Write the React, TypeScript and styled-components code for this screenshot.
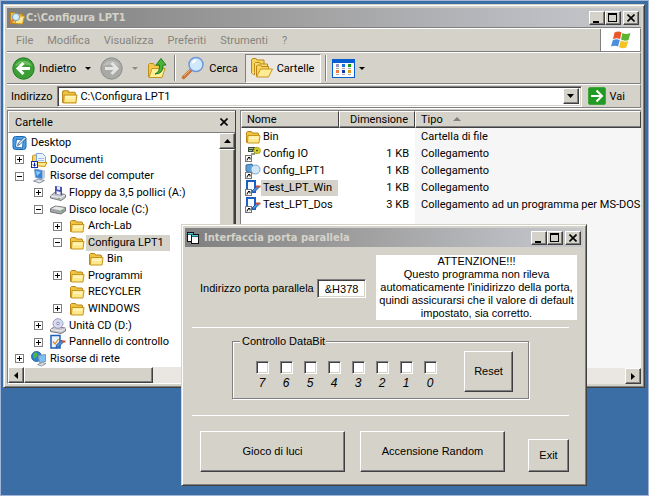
import React, { useState } from 'react';
import styled, { createGlobalStyle, css } from 'styled-components';

const face = '#d5d3c9';
const shade = '#808080';
const dark = '#404040';
const uiFont = 'Roboto, "Noto Sans", sans-serif';
const titleFont = '"DejaVu Sans Condensed", "DejaVu Sans", sans-serif';
const formFont = '"Liberation Sans", Arial, sans-serif';

const GlobalStyle = createGlobalStyle`
  *, *::before, *::after { box-sizing: border-box; }
  body { margin: 0; background: #3a6ea5; }
  button, input, table { font: inherit; color: inherit; }
  ul { list-style: none; margin: 0; padding: 0; }
  svg { display: block; flex: none; }
`;

const raised = css`
  border: 1px solid;
  border-color: #fff ${dark} ${dark} #fff;
  box-shadow: inset -1px -1px 0 ${shade};
`;

const sunken = css`
  border: 1px solid;
  border-color: ${shade} #fff #fff ${shade};
  box-shadow: inset 1px 1px 0 ${dark}, inset -1px -1px 0 ${face};
`;

const Desktop = styled.main`
  position: relative;
  display: flex;
  min-height: 100vh;
  padding: 3px 3px 107px 2px;
  background: #3a6ea5;
  border: 1px solid #a3b4d6;
  font: 11px/13px ${uiFont};
  color: #000;
`;

const WindowFrame = styled.section`
  display: flex;
  flex-direction: column;
  padding: 3px;
  background: ${face};
  border: 1px solid;
  border-color: ${face} ${dark} ${dark} ${face};
  box-shadow: inset 1px 1px 0 #fff, inset -1px -1px 0 ${shade};
`;

const ExplorerWindow = styled(WindowFrame)`
  flex: 1;
  min-width: 0;
`;

const DialogWindow = styled(WindowFrame)`
  position: absolute;
  left: 180px;
  right: 61px;
  top: 223px;
  font-family: ${formFont};
`;

const TitleBar = styled.header<{ $gap: number }>`
  display: flex;
  align-items: center;
  height: 19px;
  padding: 0 2px;
  background: linear-gradient(to right, #7f7f7f, #a0a0a0 45%, #bcbec4 85%, #c6c7c8);
  color: ${face};
  > h1 { margin-left: ${p => p.$gap}px; }
`;

const Title = styled.h1`
  flex: 1;
  margin: 0;
  font: bold 11px/15px ${titleFont};
  white-space: nowrap;
`;

const CaptionButton = styled.button<{ $apart?: boolean }>`
  ${raised}
  display: grid;
  place-items: center;
  width: 16px;
  height: 14px;
  margin-left: ${p => (p.$apart ? 2 : 0)}px;
  padding: 0;
  background: ${face};
`;

const MenuBar = styled.nav`
  display: flex;
  align-items: stretch;
  height: 24px;
  border-top: 1px solid #fff;
  border-bottom: 1px solid ${shade};
  border-right: 1px solid ${shade};
  box-shadow: 0 -1px 0 ${shade};
  margin-top: 1px;
`;

const MenuItem = styled.button`
  padding: 0 7px;
  border: 0;
  background: none;
  color: #86847e;
`;

const MenuItems = styled.div`
  display: flex;
  flex: 1;
  padding-left: 2px;
`;

const LogoBox = styled.div`
  display: grid;
  place-items: center;
  width: 40px;
  background: #fff;
  border-left: 1px solid ${shade};
`;

const ToolBar = styled.div`
  display: flex;
  align-items: center;
  gap: 2px;
  height: 32px;
  padding-left: 2px;
  border-top: 1px solid #fff;
  border-bottom: 1px solid ${shade};
  border-right: 1px solid ${shade};
`;

const ToolButton = styled.button<{ $kind?: 'arrow' | 'pressed' | 'text' }>`
  display: flex;
  align-items: center;
  gap: 4px;
  height: 29px;
  padding: 0 ${p => (p.$kind === 'text' ? 4 : p.$kind === 'arrow' ? 3 : 2)}px 0 ${p => (p.$kind === 'arrow' ? 3 : 2)}px;
  border: 1px solid transparent;
  background: none;
  font-size: 11px;
  white-space: nowrap;
  ${p =>
    p.$kind === 'pressed' &&
    css`
      padding: 0 6px 0 4px;
      background: #ebe8e3;
      border-color: ${shade} #fff #fff ${shade};
    `}
`;

const DropArrow = styled.span<{ $muted?: boolean }>`
  width: 0;
  height: 0;
  border: 3px solid transparent;
  border-bottom: 0;
  border-top-color: ${p => (p.$muted ? '#8b8a85' : '#000')};
`;

const Divider = styled.span`
  width: 2px;
  height: 26px;
  margin-left: 2px;
  background: ${shade};
  border-right: 1px solid #fff;
`;

const AddressBar = styled.form`
  display: flex;
  align-items: center;
  height: 24px;
  padding: 0 15px 0 4px;
  border-top: 1px solid #fff;
  border-bottom: 1px solid ${shade};
  border-right: 1px solid ${shade};
`;

const AddressField = styled.div`
  ${sunken}
  display: flex;
  align-items: center;
  flex: 1;
  height: 21px;
  margin: 0 6px 0 5px;
  padding: 2px 2px 2px 3px;
  background: #fff;
`;

const AddressInput = styled.input`
  flex: 1;
  min-width: 0;
  padding: 0 0 0 2px;
  border: 0;
  outline: 0;
  background: none;
`;

const ScrollButton = styled.button`
  ${raised}
  display: grid;
  place-items: center;
  flex: none;
  width: 16px;
  height: 16px;
  padding: 0;
  background: ${face};
`;

const GoButton = styled.button`
  display: flex;
  align-items: center;
  gap: 4px;
  padding: 0;
  border: 0;
  background: none;
`;

const Panes = styled.div`
  display: flex;
  flex: 1;
  min-height: 0;
  gap: 4px;
  padding-top: 1px;
  border-top: 1px solid #fff;
`;

const FolderPane = styled.aside`
  display: flex;
  flex-direction: column;
  flex: none;
  width: 229px;
  border: 1px solid ${shade};
  border-right-color: ${dark};
  border-bottom-color: #fff;
  background: #fff;
`;

const PaneHeader = styled.div`
  display: flex;
  align-items: center;
  justify-content: space-between;
  height: 22px;
  padding: 0 7px 0 6px;
  background: ${face};
  border-top: 1px solid #fff;
  border-left: 1px solid #fff;
  border-bottom: 1px solid ${shade};
`;

const PlainButton = styled.button`
  padding: 0;
  border: 0;
  background: none;
`;

const TreeArea = styled.div`
  display: flex;
  flex: 1;
`;

const Tree = styled.ul`
  display: grid;
  grid-auto-rows: 1fr;
  flex: 1;
  min-width: 0;
  padding-top: 2px;
`;

const TreeRow = styled.li<{ $level: number }>`
  display: flex;
  align-items: center;
  padding-left: ${p => p.$level * 19 - 12}px;
  white-space: nowrap;
`;

const RootRow = styled(TreeRow)`
  padding-left: 3px;
`;

const Expander = styled.button<{ $hidden?: boolean }>`
  width: 9px;
  height: 9px;
  margin: 0 6px 0 0;
  padding: 0;
  border: 1px solid ${shade};
  background: #fff;
  visibility: ${p => (p.$hidden ? 'hidden' : 'visible')};
`;

const TreeIcon = styled.span`
  display: grid;
  place-items: center;
  width: 18px;
  height: 16px;
`;

const Name = styled.span<{ $selected?: boolean }>`
  padding: 1px 6px 2px 2px;
  background: ${p => (p.$selected ? face : 'transparent')};
`;

const VScroll = styled.div`
  display: flex;
  flex-direction: column;
  width: 16px;
  background: #ebe8e3;
`;

const Thumb = styled.div`
  ${raised}
  flex: 1;
  max-width: 129px;
  background: ${face};
`;

const HScroll = styled.div`
  display: flex;
  height: 16px;
  background: #eae7e3;
`;

const FilePane = styled.div`
  display: flex;
  flex-direction: column;
  flex: 1;
  min-width: 0;
  border-top: 1px solid ${shade};
  border-left: 1px solid ${shade};
`;

const FileArea = styled.div`
  flex: 1;
  background: linear-gradient(to right, #fff 174px, #f6f6f6 174px);
`;

const FileTable = styled.table`
  width: 100%;
  table-layout: fixed;
  border-collapse: separate;
  border-spacing: 0;
`;

const HeadCell = styled.th<{ $width?: number; $right?: boolean }>`
  width: ${p => (p.$width ? `${p.$width}px` : 'auto')};
  height: 17px;
  padding: 0 6px 0 5px;
  background: ${face};
  border: 1px solid;
  border-color: #fff ${dark} ${dark} #fff;
  box-shadow: inset 0 -1px 0 ${shade};
  font-weight: normal;
  text-align: ${p => (p.$right ? 'right' : 'left')};
`;

const SortMark = styled.span`
  display: inline-block;
  margin: 0 0 2px 10px;
  border: 4px solid transparent;
  border-top: 0;
  border-bottom-color: ${shade};
`;

const Cell = styled.td<{ $right?: boolean }>`
  height: 17px;
  padding: 0 6px;
  text-align: ${p => (p.$right ? 'right' : 'left')};
  white-space: nowrap;
`;

const NameCell = styled(Cell)`
  padding: 0 0 0 4px;
`;

const FileName = styled.div`
  display: flex;
  align-items: center;
  height: 17px;
`;

const FormBody = styled.form`
  display: flex;
  flex-direction: column;
  padding: 8px 6px 10px 7px;
`;

const FormTop = styled.div`
  display: flex;
  align-items: flex-start;
  justify-content: space-between;
  padding-left: 8px;
`;

const PortLabel = styled.label`
  display: flex;
  align-items: center;
  gap: 3px;
  margin-top: 24px;
  white-space: nowrap;
`;

const PortInput = styled.input`
  ${sunken}
  width: 49px;
  height: 19px;
  padding: 1px 2px 0 7px;
  background: #fff;
`;

const Notice = styled.p`
  width: 201px;
  margin: 0;
  background: #fff;
  text-align: center;
`;

const Rule = styled.hr`
  width: calc(100% - 8px);
  margin: 7px 0 0;
  border: 0;
  border-top: 1px solid #fff;
`;

const BitGroup = styled.fieldset`
  display: flex;
  align-items: flex-start;
  justify-content: space-between;
  margin: 7px 48px 9px 40px;
  padding: 3px 15px 6px 17px;
  border: 1px solid ${shade};
  box-shadow: 1px 1px 0 #fff, inset 1px 1px 0 #fff;
`;

const BitLegend = styled.legend`
  margin-left: -10px;
  padding: 0 1px 0 2px;
  background: ${face};
`;

const Bits = styled.div`
  display: flex;
  padding-top: 10px;
`;

const Bit = styled.label`
  display: flex;
  flex-direction: column;
  align-items: center;
  gap: 3px;
  width: 24px;
  font-size: 12px;
  font-style: italic;
`;

const CheckBox = styled.input`
  ${sunken}
  appearance: none;
  width: 13px;
  height: 13px;
  margin: 0;
  background: #fff;
  &:checked { background: radial-gradient(#000 3px, #fff 4px); }
`;

const PushButton = styled.button<{ $width: number; $height: number }>`
  ${raised}
  width: ${p => p.$width}px;
  height: ${p => p.$height}px;
  padding: 0;
  background: ${face};
`;

const Actions = styled.div`
  display: flex;
  align-items: flex-end;
  padding: 15px 8px 0 8px;
  gap: 15px;
`;

const EndSlot = styled.div`
  display: flex;
  flex: 1;
  justify-content: flex-end;
`;

const Folder = ({ size = 16 }: { size?: number }) => (
  <svg width={size} height={size} viewBox="0 0 16 16">
    <path d="M1.5 13.5V3.5l1-1h4l1 1.5h5.5l.5 1v8.5z" fill="#f0c341" stroke="#b98617" />
    <path d="M2.5 13.5L3 6.5h12l-1 7.5H2.5z" fill="#ffe88a" stroke="#c8951c" />
    <path d="M4 8h9.500M4 9.500h9" stroke="#fff6c4" />
  </svg>
);

const SearchFolder = () => (
  <svg width="16" height="16" viewBox="0 0 16 16">
    <path d="M1.500 13.500V2.500h5l1 1.500h6v9.500z" fill="#f0c341" stroke="#b98617" />
    <path d="M6 13.500l2-7.500h7.500l-2 8z" fill="#ffe88a" stroke="#c8951c" />
    <circle cx="7" cy="7" r="3.600" fill="#d4ecfb" stroke="#6f9fd0" />
    <path d="M4.500 9.500L1.500 13" stroke="#d9793a" strokeWidth="2" />
  </svg>
);

const BackIcon = ({ muted }: { muted?: boolean }) => (
  <svg width="23" height="23" viewBox="0 0 23 23">
    <circle cx="11.500" cy="11.500" r="10.700" fill={muted ? '#a9a9a6' : '#3c9f36'} stroke={muted ? '#8f8f8c' : '#237c22'} />
    <path d="M3 9a9 8 0 0 1 17 0q-8-3-17 0z" fill={muted ? '#c4c4c1' : '#7ccb6c'} opacity=".7" />
    <path
      d={muted ? 'M5 11.500h11M11.500 6l5.500 5.500-5.500 5.500' : 'M18 11.500H7M11.500 6L6 11.500l5.500 5.500'}
      fill="none"
      stroke={muted ? '#e4e4e0' : '#fff'}
      strokeWidth="3"
    />
  </svg>
);

const UpIcon = () => (
  <svg width="20" height="22" viewBox="0 0 20 22">
    <path d="M1.500 19.500V7.500l1-1h4l1 2h8v11z" fill="#f2c94e" stroke="#c08d1c" />
    <path d="M2 20.500l3-9h13l-3 9z" fill="#ffee9a" stroke="#c8951c" />
    <path d="M8 17q5-2 4.500-9H9l5-6.500 5 6.500h-3q.5 9-8 9z" fill="#46b53a" stroke="#1f7d1d" />
  </svg>
);

const SearchIcon = () => (
  <svg width="24" height="24" viewBox="0 0 24 24">
    <path d="M10 14L2.500 21.500" stroke="#c8763c" strokeWidth="3.500" strokeLinecap="round" />
    <path d="M9.500 13.500L3 20" stroke="#f0b27c" strokeWidth="1" />
    <circle cx="15" cy="8.500" r="7" fill="#cfe8fb" stroke="#7196d6" strokeWidth="1.500" />
    <path d="M10.500 7.500a5 5 0 0 1 5-4q-1 4-5 4z" fill="#fff" />
  </svg>
);

const FoldersIcon = () => (
  <svg width="23" height="22" viewBox="0 0 23 22">
    <path d="M1.500 16V3l1-1.500h3.500l1 1.500h7v5" fill="#f7d45c" stroke="#b98617" />
    <path d="M4.500 18V6.500l1-1h4l1 1.500h7v5" fill="#fbe07a" stroke="#b98617" />
    <path d="M1.500 16l3 2V8" fill="none" stroke="#c8951c" />
    <path d="M6.500 19.500V9l1-1h3l1 1.500h7v3" fill="#f7d45c" stroke="#b98617" />
    <path d="M6.500 20l4-8h12l-4 8z" fill="#ffec94" stroke="#c8951c" />
  </svg>
);

const ViewsIcon = () => (
  <svg width="23" height="19" viewBox="0 0 23 19" shapeRendering="crispEdges">
    <rect width="23" height="19" fill="#0a5fd0" />
    <rect x="1" y="4" width="21" height="14" fill="#fff" />
    <rect x="4" y="5" width="3" height="3" fill="#9c93c6" />
    <rect x="10" y="5" width="3" height="3" fill="#1c6fe0" />
    <rect x="16" y="5" width="3" height="3" fill="#149b16" />
    <rect x="4" y="11" width="3" height="3" fill="#f07b4a" />
    <rect x="10" y="11" width="3" height="3" fill="#1239a6" />
    <rect x="16" y="11" width="3" height="3" fill="#d99c12" />
    <path d="M4 9.500h3M10 9.500h3M16 9.500h3M4 15.500h3M10 15.500h3M16 15.500h3" stroke="#aaa" />
  </svg>
);

const GoIcon = () => (
  <svg width="18" height="18" viewBox="0 0 18 18">
    <rect x=".5" y=".5" width="17" height="17" rx="1.500" fill="#239a24" stroke="#3fa83c" />
    <path d="M3 9h10M8.500 3.500L14 9l-5.500 5.500" fill="none" stroke="#fff" strokeWidth="2" />
  </svg>
);

const WindowsLogo = () => (
  <svg width="20" height="18" viewBox="0 0 20 18">
    <path d="M3.500 1.500q4-2 7 0L9 8.200q-3-1.700-7 0z" fill="#e8562a" />
    <path d="M11.500 2q3.500 2 8 0l-2 7q-4 1.500-7.500-.5z" fill="#5cb531" />
    <path d="M1.800 9.200q4-1.800 7 0L7 15.500q-3-1.700-7 0z" fill="#4a8fdc" />
    <path d="M9.800 9.500q3.500 2 7.500.5l-2 6.500q-4 1.800-7.300-.5z" fill="#f5c324" />
  </svg>
);

const FormIcon = () => (
  <svg width="12" height="12" viewBox="0 0 12 12">
    <path d="M0 0h7v2h5v10H4v-2H0z" fill="#111" />
    <path d="M1 3h3v6H1zM5 5h6v6H5z" fill="#fff" />
    <path d="M1 1h5v1.500H1zM5 3h6v1.500H5z" fill="#4cc8d8" />
  </svg>
);

const DesktopIcon = () => (
  <svg width="16" height="16" viewBox="0 0 16 16">
    <rect x="1" y="1.500" width="13" height="13" rx="2.500" fill="#4aa0e8" stroke="#1f66b0" />
    <rect x="4" y="4.500" width="7" height="8" fill="#fff" stroke="#2b6fb5" transform="rotate(8 7 8)" />
    <path d="M5.500 10.500l1-2.500 6-6 1.500 1.500-6 6z" fill="#d8ecfa" stroke="#194f8c" strokeWidth=".8" />
  </svg>
);

const DocumentsIcon = () => (
  <svg width="16" height="16" viewBox="0 0 16 16">
    <path d="M1.500 12V4l1-1h5v9z" fill="#f6d66a" stroke="#c8951c" />
    <path d="M5.500 1.500h6l3 3v8h-9z" fill="#e9f3fd" stroke="#7ea6d6" />
    <path d="M7 6.500h6M7 8.500h6M7 10.500h6" stroke="#9dbfe8" />
    <path d="M3 13.500l2-3h11l-2 4z" fill="#ffe88a" stroke="#c8951c" />
    <rect x=".5" y="9.500" width="6" height="6" fill="#fff" stroke="#1c2fb0" />
    <path d="M3.500 10.500v4M2 12.500l1.500 1.500L5 12.500" fill="none" stroke="#0018a8" />
  </svg>
);

const ComputerIcon = () => (
  <svg width="16" height="16" viewBox="0 0 16 16">
    <path d="M3.500 1l8 1.500v8.500l-7-1.500z" fill="#2f83e0" stroke="#8ca3bd" />
    <path d="M5 3l5 1-4 4z" fill="#8cd0fa" />
    <path d="M11.500 2.500L14 2v8l-2.500 1z" fill="#c3cbd6" />
    <path d="M2.500 13l5-2 6 1.500-5 2.500z" fill="#dce0e8" stroke="#8c95a5" />
  </svg>
);

const FloppyDriveIcon = () => (
  <svg width="16" height="16" viewBox="0 0 16 16">
    <path d="M.5 11l4-3.500 11 2v3l-4.500 3L.5 13z" fill="#c4c5c9" stroke="#7a7b80" />
    <path d="M1 11l10 1.500 4.500-3" fill="none" stroke="#f2f2f4" />
    <path d="M5 1l7 1v8.500L5 9z" fill="#4b51b0" />
    <path d="M7 1.500l3 .5v3L7 4.500zM6.500 6l4 1v3l-4-1z" fill="#eceef8" />
    <circle cx="9" cy="13.500" r=".7" fill="#2da02b" />
  </svg>
);

const DiskIcon = () => (
  <svg width="16" height="16" viewBox="0 0 16 16">
    <path d="M.5 6.500l5-2.500 10 1.500v3.500L11 12 .5 10z" fill="#a3a4a8" stroke="#77787c" />
    <path d="M1.500 6.500l4.500-2 8.500 1.500L10.500 8.500z" fill="#e6e7e9" />
    <circle cx="12.500" cy="9" r=".8" fill="#46a848" />
  </svg>
);

const CdIcon = () => (
  <svg width="16" height="16" viewBox="0 0 16 16">
    <path d="M.5 11.500l4-3 11 1.500v3l-4.500 2.500-10.500-2z" fill="#c4c5c9" stroke="#7a7b80" />
    <path d="M1 11.500l10 1.500 4.500-2.500" fill="none" stroke="#f2f2f4" />
    <ellipse cx="8" cy="5.500" rx="5" ry="4.800" fill="#dcd9f2" stroke="#9c99c0" />
    <path d="M8 5.500l3.500-3.500 1.300 3z" fill="#b5e3f0" />
    <circle cx="8" cy="5.500" r="1.300" fill="#fff" stroke="#8886ac" />
  </svg>
);

const PanelIcon = () => (
  <svg width="16" height="16" viewBox="0 0 16 16">
    <rect x="1" y="1.500" width="9" height="12.500" fill="#e9f4fd" stroke="#1d5fb8" strokeWidth="1.500" />
    <path d="M3 7.500l2 2.500 3.500-5" fill="none" stroke="#e08a2c" strokeWidth="1.300" />
    <path d="M6.500 11l5-5 2 2-5 5-2.500.5z" fill="#4a8fe0" stroke="#1c4d93" strokeWidth=".8" />
    <path d="M11 7.500h4.500" stroke="#c5533c" strokeWidth="2" />
  </svg>
);

const NetworkIcon = () => (
  <svg width="16" height="16" viewBox="0 0 16 16">
    <circle cx="5.500" cy="5.500" r="5" fill="#2b7fd8" stroke="#175199" strokeWidth=".8" />
    <path d="M2 2.500q3-2 5 0L5.500 6 3 8zM7 5l3 1-2 3z" fill="#4db748" />
    <path d="M7.500 4.500l7-1v7l-6 1z" fill="#7fc0f4" stroke="#8697ac" />
    <path d="M6.500 13.500l5-2 3.500 1-4.500 2.500z" fill="#dce0e8" stroke="#8c95a5" />
  </svg>
);

const ShortcutMark = () => (
  <>
    <rect x=".5" y="9.500" width="6" height="6" fill="#fff" stroke="#777" />
    <path d="M2 14.500q0-2.500 2.500-3M3 11.500h2v2" fill="none" stroke="#000" />
  </>
);

const BoardLinkIcon = () => (
  <svg width="16" height="16" viewBox="0 0 16 16">
    <rect x="3" y="1" width="7" height="5" fill="#3d4a3c" />
    <path d="M4 2.500h4M4 4.500h3" stroke="#9fc08f" />
    <path d="M6 8h4V6" fill="none" stroke="#333" />
    <circle cx="12" cy="4.500" r="3.500" fill="#8c861c" />
    <circle cx="12" cy="4.500" r="2.800" fill="#e0d82e" stroke="#c9c02a" strokeDasharray="1.500 1" strokeWidth="2" />
    <circle cx="12" cy="4.500" r="1" fill="#55521a" />
    <ShortcutMark />
  </svg>
);

const GearLinkIcon = () => (
  <svg width="16" height="16" viewBox="0 0 16 16">
    <path d="M1 2l6-1 2 5-4 4-4-2z" fill="#5a9fd6" stroke="#3a6c9c" />
    <circle cx="10.500" cy="6.500" r="4.500" fill="#cfe7f8" stroke="#7fa5c8" />
    <path d="M7 10l-2 3" stroke="#9a7c56" strokeWidth="2" />
    <ShortcutMark />
  </svg>
);

const AppLinkIcon = () => (
  <svg width="16" height="16" viewBox="0 0 16 16">
    <rect x="2" y="1" width="8" height="11" fill="#f4faff" stroke="#1d5fc0" strokeWidth="2" />
    <path d="M7 11l5-5 2 1.500-5 5z" fill="#4a8fe0" stroke="#1c4d93" strokeWidth=".8" />
    <path d="M11 6.500h4.500" stroke="#c5533c" strokeWidth="2" />
    <ShortcutMark />
  </svg>
);

const arrows = {
  up: 'M0 4h7L3.500 0z',
  down: 'M0 0h7L3.500 4z',
  left: 'M4 0v7L0 3.500z',
  right: 'M0 0v7l4-3.500z',
};

const Arrow = ({ to }: { to: keyof typeof arrows }) => (
  <svg width={to === 'up' || to === 'down' ? 7 : 4} height={to === 'up' || to === 'down' ? 4 : 7}>
    <path d={arrows[to]} />
  </svg>
);

const Cross = () => (
  <svg width="8" height="8" viewBox="0 0 8 8">
    <path d="M.5.5l7 7M7.500.5l-7 7" stroke="#000" strokeWidth="1.600" />
  </svg>
);

const CaptionButtons = () => (
  <>
    <CaptionButton type="button" aria-label="Riduci a icona">
      <svg width="10" height="10"><path d="M1 8h6v2H1z" /></svg>
    </CaptionButton>
    <CaptionButton type="button" aria-label="Ingrandisci">
      <svg width="10" height="9" shapeRendering="crispEdges"><path d="M0 0h9v9H0zM1 2v6h7V2z" fillRule="evenodd" /></svg>
    </CaptionButton>
    <CaptionButton type="button" aria-label="Chiudi" $apart>
      <Cross />
    </CaptionButton>
  </>
);

type Node = { name: string; level: number; mark?: '+' | '-'; icon: React.ReactNode; selected?: boolean };

const nodes: Node[] = [
  { name: 'Desktop', level: 0, icon: <DesktopIcon /> },
  { name: 'Documenti', level: 1, mark: '+', icon: <DocumentsIcon /> },
  { name: 'Risorse del computer', level: 1, mark: '-', icon: <ComputerIcon /> },
  { name: 'Floppy da 3,5 pollici (A:)', level: 2, mark: '+', icon: <FloppyDriveIcon /> },
  { name: 'Disco locale (C:)', level: 2, mark: '-', icon: <DiskIcon /> },
  { name: 'Arch-Lab', level: 3, mark: '+', icon: <Folder /> },
  { name: 'Configura LPT1', level: 3, mark: '-', icon: <Folder />, selected: true },
  { name: 'Bin', level: 4, icon: <Folder /> },
  { name: 'Programmi', level: 3, mark: '+', icon: <Folder /> },
  { name: 'RECYCLER', level: 3, icon: <Folder /> },
  { name: 'WINDOWS', level: 3, mark: '+', icon: <Folder /> },
  { name: 'Unità CD (D:)', level: 2, mark: '+', icon: <CdIcon /> },
  { name: 'Pannello di controllo', level: 2, mark: '+', icon: <PanelIcon /> },
  { name: 'Risorse di rete', level: 1, mark: '+', icon: <NetworkIcon /> },
];

const files = [
  { name: 'Bin', size: '', type: 'Cartella di file', icon: <Folder /> },
  { name: 'Config IO', size: '1 KB', type: 'Collegamento', icon: <BoardLinkIcon /> },
  { name: 'Config_LPT1', size: '1 KB', type: 'Collegamento', icon: <GearLinkIcon /> },
  { name: 'Test_LPT_Win', size: '1 KB', type: 'Collegamento', icon: <AppLinkIcon />, selected: true },
  { name: 'Test_LPT_Dos', size: '3 KB', type: 'Collegamento ad un programma per MS-DOS', icon: <AppLinkIcon /> },
];

const Explorer = () => (
  <ExplorerWindow aria-label="Esplora risorse">
    <TitleBar $gap={1}>
      <SearchFolder />
      <Title>C:\Configura LPT1</Title>
      <CaptionButtons />
    </TitleBar>
    <MenuBar>
      <MenuItems>
        {['File', 'Modifica', 'Visualizza', 'Preferiti', 'Strumenti', '?'].map(item => (
          <MenuItem key={item} type="button">{item}</MenuItem>
        ))}
      </MenuItems>
      <LogoBox><WindowsLogo /></LogoBox>
    </MenuBar>
    <ToolBar>
      <ToolButton type="button"><BackIcon />Indietro</ToolButton>
      <ToolButton type="button" $kind="arrow" aria-label="Cronologia indietro"><DropArrow /></ToolButton>
      <ToolButton type="button" aria-label="Avanti"><BackIcon muted /></ToolButton>
      <ToolButton type="button" $kind="arrow" aria-label="Cronologia avanti"><DropArrow $muted /></ToolButton>
      <ToolButton type="button" aria-label="Cartella superiore"><UpIcon /></ToolButton>
      <Divider />
      <ToolButton type="button" $kind="text"><SearchIcon />Cerca</ToolButton>
      <ToolButton type="button" $kind="pressed"><FoldersIcon />Cartelle</ToolButton>
      <Divider />
      <ToolButton type="button" aria-label="Visualizza"><ViewsIcon /><DropArrow /></ToolButton>
    </ToolBar>
    <AddressBar onSubmit={e => e.preventDefault()}>
      <label htmlFor="address">Indirizzo</label>
      <AddressField>
        <Folder size={17} />
        <AddressInput id="address" defaultValue="C:\Configura LPT1" />
        <ScrollButton type="button" aria-label="Apri elenco"><Arrow to="down" /></ScrollButton>
      </AddressField>
      <GoButton type="submit"><GoIcon />Vai</GoButton>
    </AddressBar>
    <Panes>
      <FolderPane>
        <PaneHeader>
          Cartelle
          <PlainButton type="button" aria-label="Chiudi cartelle"><Cross /></PlainButton>
        </PaneHeader>
        <TreeArea>
          <Tree>
            {nodes.map(n => {
              const Row = n.level === 0 ? RootRow : TreeRow;
              return (
                <Row key={n.name + n.level} $level={n.level}>
                  {n.level > 0 && (
                    <Expander type="button" $hidden={!n.mark} aria-label={n.mark === '+' ? 'Espandi' : 'Comprimi'}>
                      <svg width="7" height="7" shapeRendering="crispEdges">
                        <path d={n.mark === '+' ? 'M1 3h5v1H1zM3 1h1v5H3z' : 'M1 3h5v1H1z'} />
                      </svg>
                    </Expander>
                  )}
                  <TreeIcon>{n.icon}</TreeIcon>
                  <Name $selected={n.selected}>{n.name}</Name>
                </Row>
              );
            })}
          </Tree>
          <VScroll>
            <ScrollButton type="button" aria-label="Scorri su"><Arrow to="up" /></ScrollButton>
            <Thumb />
          </VScroll>
        </TreeArea>
        <HScroll>
          <ScrollButton type="button" aria-label="Scorri a sinistra"><Arrow to="left" /></ScrollButton>
          <Thumb />
        </HScroll>
      </FolderPane>
      <FilePane>
        <FileArea>
          <FileTable>
            <thead>
              <tr>
                <HeadCell $width={98}>Nome</HeadCell>
                <HeadCell $width={76} $right>Dimensione</HeadCell>
                <HeadCell>Tipo<SortMark /></HeadCell>
              </tr>
            </thead>
            <tbody>
              {files.map(f => (
                <tr key={f.name}>
                  <NameCell>
                    <FileName>{f.icon}<Name $selected={f.selected}>{f.name}</Name></FileName>
                  </NameCell>
                  <Cell $right>{f.size}</Cell>
                  <Cell>{f.type}</Cell>
                </tr>
              ))}
            </tbody>
          </FileTable>
        </FileArea>
        <HScroll>
          <EndSlot>
            <ScrollButton type="button" aria-label="Scorri a destra"><Arrow to="right" /></ScrollButton>
          </EndSlot>
        </HScroll>
      </FilePane>
    </Panes>
  </ExplorerWindow>
);

const ParallelDialog = () => {
  const [bits, setBits] = useState(0);
  return (
    <DialogWindow role="dialog" aria-label="Interfaccia porta parallela">
      <TitleBar $gap={5}>
        <FormIcon />
        <Title>Interfaccia porta parallela</Title>
        <CaptionButtons />
      </TitleBar>
      <FormBody onSubmit={e => e.preventDefault()}>
        <FormTop>
          <PortLabel>
            Indirizzo porta parallela
            <PortInput defaultValue="&H378" />
          </PortLabel>
          <Notice>
            ATTENZIONE!!!<br />
            Questo programma non rileva<br />
            automaticamente l'inidirizzo della porta,<br />
            quindi assicurarsi che il valore di default<br />
            impostato, sia corretto.
          </Notice>
        </FormTop>
        <Rule />
        <BitGroup>
          <BitLegend>Controllo DataBit</BitLegend>
          <Bits>
            {[7, 6, 5, 4, 3, 2, 1, 0].map(b => (
              <Bit key={b}>
                <CheckBox type="checkbox" checked={Boolean(bits & (1 << b))} onChange={() => setBits(bits ^ (1 << b))} />
                {b}
              </Bit>
            ))}
          </Bits>
          <PushButton type="button" $width={49} $height={41} onClick={() => setBits(0)}>Reset</PushButton>
        </BitGroup>
        <Rule />
        <Actions>
          <PushButton type="button" $width={145} $height={41}>Gioco di luci</PushButton>
          <PushButton type="button" $width={145} $height={41}>Accensione Random</PushButton>
          <EndSlot>
            <PushButton type="button" $width={41} $height={33}>Exit</PushButton>
          </EndSlot>
        </Actions>
      </FormBody>
    </DialogWindow>
  );
};

export default function App() {
  return (
    <>
      <GlobalStyle />
      <Desktop>
        <Explorer />
        <ParallelDialog />
      </Desktop>
    </>
  );
}
